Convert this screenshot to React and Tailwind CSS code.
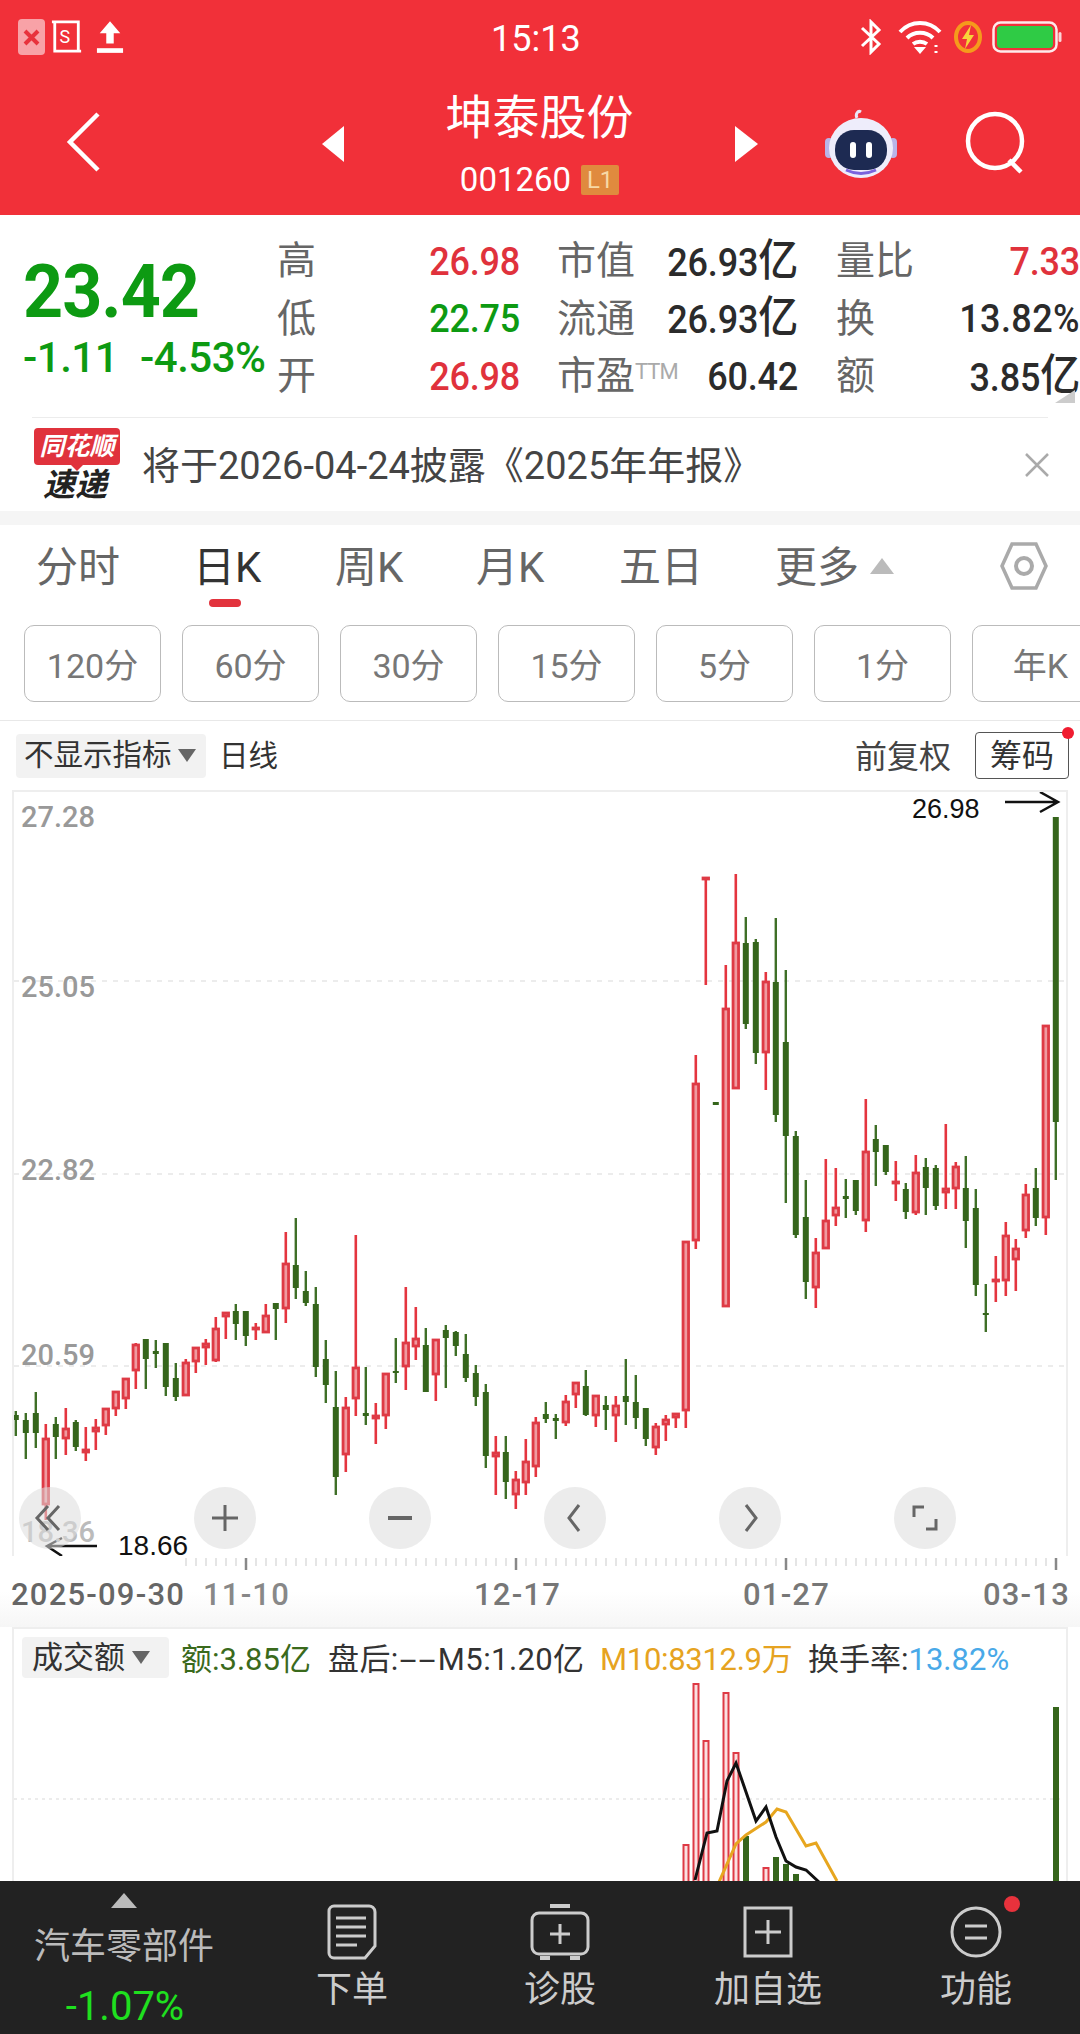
import React from 'react';

const candles = [
  [1411,1415,1420,1436,'g'],[1413,1420,1433,1459,'g'],[1392,1413,1433,1448,'g'],[1424,1438,1505,1520,'r'],
  [1417,1424,1437,1459,'g'],[1408,1428,1439,1455,'r'],[1420,1422,1447,1451,'g'],[1427,1449,1453,1461,'r'],
  [1419,1427,1432,1450,'r'],[1408,1408,1426,1435,'r'],[1391,1391,1409,1416,'r'],[1378,1378,1399,1409,'r'],
  [1343,1344,1371,1389,'r'],[1339,1339,1359,1389,'g'],[1340,1351,1354,1368,'g'],[1343,1343,1387,1396,'g'],
  [1363,1378,1397,1401,'g'],[1359,1362,1396,1396,'r'],[1347,1347,1362,1373,'r'],[1339,1343,1348,1365,'r'],
  [1317,1328,1361,1362,'r'],[1312,1312,1317,1339,'r'],[1304,1311,1324,1340,'g'],[1311,1311,1336,1346,'g'],
  [1323,1327,1330,1340,'r'],[1304,1315,1333,1333,'r'],[1303,1303,1309,1340,'g'],[1232,1263,1309,1323,'r'],
  [1218,1265,1288,1299,'g'],[1271,1291,1303,1306,'g'],[1287,1304,1367,1377,'g'],[1340,1359,1385,1403,'g'],
  [1371,1407,1477,1495,'g'],[1397,1407,1455,1472,'r'],[1235,1367,1399,1416,'r'],[1367,1413,1416,1425,'g'],
  [1403,1415,1419,1444,'r'],[1373,1373,1416,1429,'r'],[1338,1371,1373,1383,'g'],[1287,1342,1367,1390,'r'],
  [1307,1338,1347,1360,'r'],[1328,1345,1392,1392,'g'],[1339,1339,1375,1401,'r'],[1325,1330,1338,1388,'g'],
  [1331,1332,1346,1356,'g'],[1334,1354,1378,1382,'g'],[1365,1373,1397,1406,'g'],[1384,1392,1456,1468,'g'],
  [1436,1452,1457,1495,'r'],[1436,1452,1482,1499,'g'],[1471,1479,1495,1509,'r'],[1439,1461,1483,1495,'r'],
  [1417,1422,1467,1477,'r'],[1402,1414,1419,1423,'g'],[1414,1418,1421,1439,'g'],[1395,1401,1423,1426,'r'],
  [1382,1382,1395,1408,'r'],[1370,1386,1415,1416,'g'],[1395,1395,1416,1427,'r'],[1396,1405,1410,1430,'g'],
  [1396,1405,1416,1442,'r'],[1359,1396,1402,1425,'g'],[1375,1402,1418,1429,'g'],[1408,1408,1439,1446,'g'],
  [1423,1426,1448,1455,'r'],[1415,1419,1425,1441,'r'],[1413,1413,1418,1428,'r'],[1241,1241,1411,1428,'r'],
  [1055,1083,1241,1249,'r'],[877,877,879,985,'r'],[1102,1102,1105,1105,'g'],[965,1008,1307,1307,'r'],
  [874,942,1089,1089,'r'],[917,943,1024,1029,'g'],[939,942,1053,1064,'g'],[972,981,1053,1090,'r'],
  [918,982,1115,1122,'g'],[970,1042,1136,1203,'g'],[1131,1136,1235,1238,'g'],[1180,1217,1282,1299,'g'],
  [1238,1252,1288,1308,'r'],[1159,1220,1249,1249,'r'],[1168,1207,1216,1226,'r'],[1179,1196,1199,1218,'g'],
  [1180,1180,1211,1215,'g'],[1099,1151,1221,1232,'r'],[1125,1139,1152,1186,'g'],[1145,1145,1172,1175,'g'],
  [1161,1181,1184,1201,'r'],[1183,1189,1212,1219,'g'],[1155,1172,1213,1215,'r'],[1158,1167,1188,1215,'g'],
  [1165,1168,1206,1210,'g'],[1124,1188,1193,1209,'r'],[1162,1166,1189,1209,'r'],[1156,1188,1221,1248,'g'],
  [1189,1208,1285,1296,'g'],[1284,1313,1315,1332,'g'],[1256,1279,1281,1302,'r'],[1222,1235,1281,1296,'r'],
  [1239,1248,1260,1291,'r'],[1184,1194,1231,1238,'r'],[1168,1188,1218,1226,'g'],[1025,1025,1218,1235,'r'],
  [817,817,1122,1180,'g'],
];

const volumes = [
  [686,1844,'r'],[696,1683,'r'],[706,1740,'r'],[726,1692,'r'],[736,1752,'r'],[746,1836,'g'],
  [766,1867,'r'],[776,1857,'g'],[786,1864,'g'],[796,1874,'g'],[1056,1707,'g'],
];

const GREEN = '#35651b';
const RED = '#e4353f';

const Candle = ({ i, d }) => {
  const [hi, top, bot, lo, c] = d;
  const x = 15.8 + 10 * i;
  if (c === 'g') {
    return (
      <g>
        <line x1={x} x2={x} y1={hi} y2={lo} stroke="#3f6f27" strokeWidth="2.4" />
        <rect x={x - 3} y={top} width="6" height={Math.max(bot - top, 2)} fill={GREEN} />
      </g>
    );
  }
  return (
    <g>
      <line x1={x} x2={x} y1={hi} y2={top} stroke={RED} strokeWidth="2.6" />
      <line x1={x} x2={x} y1={bot} y2={lo} stroke={RED} strokeWidth="2.6" />
      <rect x={x - 2.75} y={top + 1} width="5.5" height={Math.max(bot - top - 2, 1)} fill="#f09aa0" stroke="#de3a45" strokeWidth="2.8" />
    </g>
  );
};

const Yi = () => <span className="text-[40px]">亿</span>;

const Row = ({ label, value, cls = 'text-[#2b2b2b]', w = 'w-[243px]' }) => (
  <div className={`${w} flex items-center justify-between`}>
    <span className="text-[#666] text-[39px] leading-none">{label}</span>
    <span className={`inline-block scale-y-[1.1] text-[36px] leading-none font-medium tracking-[-0.2px] ${cls}`}>{value}</span>
  </div>
);

const NavItem = ({ icon, label }) => (
  <div className="w-[208px] flex flex-col items-center text-[#ccc]">
    <div className="h-[62px] mt-[20px] flex items-center justify-center">{icon}</div>
    <span className="text-[36px] leading-none mt-[9px]">{label}</span>
  </div>
);

const CircleBtn = ({ children, cls }) => (
  <div className={`absolute top-[695px] w-[62px] h-[62px] rounded-full bg-[#dcdcdc]/55 flex items-center justify-center ${cls}`}>
    <svg width="36" height="36" viewBox="0 0 36 36" fill="none" stroke="#666" strokeWidth="3">{children}</svg>
  </div>
);

const timeframes = ['120分', '60分', '30分', '15分', '5分', '1分', '年K'];
const ticks = Array.from({ length: 88 }, (_, i) => 186 + i * 10);

export default function App() {
  return (
    <div className="w-[1080px] h-[2034px] overflow-hidden bg-white flex flex-col font-['Roboto','Noto_Sans_CJK_SC',sans-serif]">
      {/* red header */}
      <div className="h-[215px] bg-[#f13039] shrink-0 text-white">
        <div className="h-[74px] flex items-center justify-between relative">
          <div className="flex items-center pl-[18px] gap-[6px]">
            <div className="w-[27px] h-[36px] rounded-[4px] bg-[#f8a2a7] flex items-center justify-center">
              <svg width="17" height="17" viewBox="0 0 17 17" stroke="#e8323c" strokeWidth="4"><path d="M2 2 15 15M15 2 2 15" /></svg>
            </div>
            <svg width="32" height="38" viewBox="0 0 34 38" fill="none" stroke="#fff" strokeWidth="3">
              <path d="M1 3h28v30M4 3v31h28" />
              <text x="9" y="25" fill="#fff" stroke="none" fontSize="19" fontFamily="Roboto">S</text>
            </svg>
            <svg width="28" height="36" viewBox="0 0 30 36" fill="#fff" className="ml-[7px]">
              <path d="M15 1 26 14H19V25H11V14H4Z" />
              <rect x="1" y="30" width="28" height="5" />
            </svg>
          </div>
          <span className="absolute left-[491px] text-[36px] leading-none top-[21px]">15:13</span>
          <div className="flex items-center pr-[18px] gap-[10px]">
            <svg width="24" height="36" viewBox="0 0 24 36" fill="none" stroke="#fff" strokeWidth="3" className="mr-[4px]"><path d="M3 9 20 25 12 33V3L20 11 3 27" /></svg>
            <svg width="46" height="34" viewBox="0 0 46 34" fill="none" stroke="#fff" strokeWidth="4" className="ml-[1px]">
              <path d="M2 12C13 0 31 0 42 12M9 18C16 11 28 11 35 18M15 24c4-3 10-3 14 0" />
              <path d="M16 27l6 7 6-7z" fill="#fff" stroke="none" />
              <path d="M38 25v2M38 31v2" strokeWidth="3" />
            </svg>
            <svg width="28" height="32" viewBox="0 0 28 32" className="mr-[6px]">
              <ellipse cx="14" cy="16" rx="12" ry="14" fill="none" stroke="#f59a1c" strokeWidth="4" />
              <path d="M17 4 8 18h5l-2 10 9-14h-5z" fill="#f7d33a" />
            </svg>
            <svg width="70" height="32" viewBox="0 0 70 32" className="-ml-[6px]">
              <rect x="1.5" y="1.5" width="63" height="29" rx="7" fill="none" stroke="#fff" strokeWidth="2.5" opacity="0.9" />
              <rect x="5" y="5" width="56" height="22" rx="4" fill="#2fcb45" />
              <rect x="66.5" y="11" width="3" height="10" rx="1.5" fill="#fff" opacity="0.8" />
            </svg>
          </div>
        </div>
        <div className="h-[141px] flex items-start">
          <svg width="36" height="60" viewBox="0 0 36 60" fill="none" stroke="#fff" strokeWidth="4.5" className="ml-[66px] mt-[38px]">
            <path d="M32 2 4 30 32 58" strokeLinejoin="miter" />
          </svg>
          <svg width="22" height="36" viewBox="0 0 22 36" fill="#fff" className="ml-[220px] mt-[52px]"><path d="M22 0V36L0 18Z" /></svg>
          <div className="w-[391px] flex flex-col items-center">
            <span className="text-[47px] leading-none mt-[20px]">坤泰股份</span>
            <div className="flex items-center gap-[10px] mt-[22px]">
              <span className="text-[33px] leading-none">001260</span>
              <span className="w-[38px] h-[30px] bg-[#e08a3e] rounded-[2px] text-[#f7d9a6] text-[24px] leading-[30px] text-center">L1</span>
            </div>
          </div>
          <svg width="23" height="36" viewBox="0 0 23 36" fill="#fff" className="mt-[52px]"><path d="M0 0V36L23 18Z" /></svg>
          <svg width="74" height="72" viewBox="0 0 74 72" className="ml-[66px] mt-[34px]">
            <path d="M33 10c-2-4 1-8 4-6" fill="none" stroke="#e8e6f7" strokeWidth="3" />
            <rect x="1" y="30" width="8" height="20" rx="4" fill="#b9b4e8" />
            <rect x="65" y="30" width="8" height="20" rx="4" fill="#b9b4e8" />
            <ellipse cx="37" cy="40" rx="32" ry="30" fill="#eeedfb" />
            <rect x="11" y="22" width="52" height="40" rx="19" fill="#1d2a52" />
            <path d="M22 62Q37 69 52 62" fill="none" stroke="#7a63dd" strokeWidth="3" />
            <rect x="26" y="34" width="6" height="16" rx="3" fill="#fff" />
            <rect x="42" y="34" width="6" height="16" rx="3" fill="#fff" />
          </svg>
          <svg width="62" height="64" viewBox="0 0 62 64" fill="none" stroke="#fff" strokeWidth="4.5" className="ml-[67px] mt-[36px]">
            <ellipse cx="30" cy="31" rx="27" ry="27" />
            <path d="M44 50 56 62" />
          </svg>
        </div>
      </div>

      {/* quote */}
      <div className="h-[202px] shrink-0 flex relative">
        <div className="w-[277px] shrink-0 pl-[23px] pt-[47px]">
          <div className="h-[60px] flex items-center">
            <span className="inline-block scale-y-[1.05] text-[70px] leading-[56px] font-bold text-[#0d9a12] tracking-[-1px]">23.42</span>
          </div>
          <div className="flex text-[42px] leading-none font-medium text-[#0d9a12] mt-[15px] tracking-[-0.5px] whitespace-nowrap">
            <span className="w-[117px]">-1.11</span>
            <span>-4.53%</span>
          </div>
        </div>
        <div className="flex-1 pt-[18px] flex flex-col whitespace-nowrap">
          <div className="h-[57.5px] flex items-center">
            <Row label="高" value="26.98" cls="text-[#e0323c]" />
            <div className="w-[37px]" />
            <Row label="市值" value={<>26.93<Yi /></>} w="w-[241px]" />
            <div className="w-[38px]" />
            <Row label="量比" value="7.33" cls="text-[#e0323c]" w="w-[244px]" />
          </div>
          <div className="h-[57.5px] flex items-center">
            <Row label="低" value="22.75" cls="text-[#0d9a12]" />
            <div className="w-[37px]" />
            <Row label="流通" value={<>26.93<Yi /></>} w="w-[241px]" />
            <div className="w-[38px]" />
            <Row label="换" value="13.82%" cls="text-[#2b2b2b] tracking-[0.4px]" w="w-[244px]" />
          </div>
          <div className="h-[57.5px] flex items-center">
            <Row label="开" value="26.98" cls="text-[#e0323c]" />
            <div className="w-[37px]" />
            <Row
              label={<>市盈<span className="text-[22px] text-[#aaa] tracking-[-1px] align-[10px]">TTM</span></>}
              value="60.42"
              w="w-[241px]"
            />
            <div className="w-[38px]" />
            <Row label="额" value={<>3.85<Yi /></>} w="w-[244px]" />
          </div>
        </div>
        <div className="absolute right-[5px] bottom-[14px] w-0 h-0 border-l-[20px] border-l-transparent border-b-[13px] border-b-[#ccc]" />
      </div>
      <div className="h-px shrink-0 bg-[#ececec] mx-[32px]" />

      {/* notice */}
      <div className="h-[93px] shrink-0 flex items-center pl-[33px] pr-[30px]">
        <div className="w-[88px] flex flex-col items-center">
          <div className="w-[86px] h-[37px] bg-[#e0323c] rounded-[4px] text-white text-[25px] leading-[37px] italic font-bold text-center relative">
            同花顺
            <div className="absolute left-[36px] -bottom-[6px] w-0 h-0 border-x-[7px] border-x-transparent border-t-[7px] border-t-[#e0323c]" />
          </div>
          <div className="text-[32px] leading-none italic font-bold text-[#222] mt-[4px] -ml-[4px]">速递</div>
        </div>
        <span className="ml-[21px] mt-[2px] text-[38px] leading-none text-[#444] whitespace-nowrap">将于2026-04-24披露《2025年年报》</span>
        <svg width="26" height="26" viewBox="0 0 26 26" stroke="#aaa" strokeWidth="2.5" className="ml-auto"><path d="M2 2 24 24M24 2 2 24" /></svg>
      </div>
      <div className="h-[14px] shrink-0 bg-[#f5f5f5]" />

      {/* period tabs */}
      <div className="h-[87px] shrink-0 flex items-start pl-[36px] pt-[22px] text-[42px] leading-none text-[#666] relative whitespace-nowrap">
        <span className="w-[157px]">分时</span>
        <span className="w-[142px] text-[#333] relative">
          日K
          <span className="absolute left-[16px] top-[52px] w-[32px] h-[8px] rounded-full bg-[#e2333d]" />
        </span>
        <span className="w-[141px]">周K</span>
        <span className="w-[143px]">月K</span>
        <span className="w-[156px]">五日</span>
        <span>更多</span>
        <span className="ml-[11px] mt-[11px] w-0 h-0 border-x-[12px] border-x-transparent border-b-[16px] border-b-[#bbb]" />
        <svg width="50" height="48" viewBox="0 0 50 48" fill="none" stroke="#aaa" className="absolute left-[999px] top-[17px]">
          <path d="M3 24 13 2h24l10 22L37 46H13Z" strokeWidth="3.5" />
          <circle cx="25" cy="24" r="8" strokeWidth="4" />
        </svg>
      </div>

      {/* timeframes */}
      <div className="h-[109px] shrink-0 flex gap-[21px] pl-[24px] pt-[13px] overflow-hidden border-b border-[#e8e8e8]">
        {timeframes.map((t) => (
          <div key={t} className="w-[137px] h-[77px] shrink-0 border border-[#bbb] rounded-[10px] flex items-center justify-center pt-[5px] text-[34px] text-[#777]">
            {t}
          </div>
        ))}
      </div>

      {/* chart toolbar */}
      <div className="h-[69px] shrink-0 relative flex items-center pl-[16px] text-[29.5px] text-[#333] whitespace-nowrap">
        <div className="w-[190px] h-[44px] bg-[#f2f2f2] rounded-[4px] flex items-center pl-[8px]">
          不显示指标
          <span className="ml-[6px] w-0 h-0 border-x-[9px] border-x-transparent border-t-[13px] border-t-[#666]" />
        </div>
        <span className="ml-[13px] mt-[2px]">日线</span>
        <span className="ml-auto mr-[24px] mt-[2px] text-[32px] text-[#444]">前复权</span>
        <div className="w-[94px] h-[47px] border border-[#555] rounded-[4px] flex items-center justify-center mr-[11px] text-[32px] relative">
          筹码
          <span className="absolute -right-[6px] -top-[6px] w-[12px] h-[12px] rounded-full bg-[#f01c30]" />
        </div>
      </div>

      {/* k-line chart */}
      <div className="h-[766px] shrink-0 mx-[12px] border-x-2 border-t-2 border-[#eee] relative">
        <svg width="1052" height="764" viewBox="14 792 1052 764" className="absolute left-0 top-0">
          {[981, 1174, 1366].map((y) => (
            <line key={y} x1="14" x2="1064" y1={y} y2={y} stroke="#e6e6e6" strokeWidth="1.5" strokeDasharray="5 6" />
          ))}
          {candles.map((d, i) => <Candle key={i} i={i} d={d} />)}
          <path d="M1005 802H1057M1040 792 1058 802 1040 812" fill="none" stroke="#111" strokeWidth="2.5" />
          <path d="M97 1546H48M62 1538 47 1546 62 1556" fill="none" stroke="#111" strokeWidth="2.5" />
        </svg>
        <span className="absolute left-[7px] top-[10px] text-[29px] leading-[30px] font-medium text-[#999]">27.28</span>
        <span className="absolute left-[7px] top-[180px] text-[29px] leading-[30px] font-medium text-[#999]">25.05</span>
        <span className="absolute left-[7px] top-[363px] text-[29px] leading-[30px] font-medium text-[#999]">22.82</span>
        <span className="absolute left-[7px] top-[548px] text-[29px] leading-[30px] font-medium text-[#999]">20.59</span>
        <span className="absolute left-[7px] top-[725px] text-[29px] leading-[30px] font-medium text-[#bbb]">18.36</span>
        <span className="absolute left-[898px] top-[2px] text-[27px] leading-[30px] text-[#111] font-['Liberation_Sans',sans-serif]">26.98</span>
        <span className="absolute left-[104px] top-[739px] text-[28px] leading-[30px] text-[#111] font-['Liberation_Sans',sans-serif]">18.66</span>
        <CircleBtn cls="left-[5px]"><path d="M16 6 5 18 16 30M27 6 16 18 27 30" /></CircleBtn>
        <CircleBtn cls="left-[180px]"><path d="M18 5V31M5 18H31" /></CircleBtn>
        <CircleBtn cls="left-[355px]"><path d="M6 18H30" strokeWidth="4" /></CircleBtn>
        <CircleBtn cls="left-[530px]"><path d="M22 5 12 18 22 31" /></CircleBtn>
        <CircleBtn cls="left-[705px]"><path d="M14 5 24 18 14 31" /></CircleBtn>
        <CircleBtn cls="left-[880px]"><path d="M17 7H7V17M19 29H29V19" /></CircleBtn>
      </div>

      {/* time axis */}
      <div className="h-[71px] shrink-0 relative bg-gradient-to-b from-white via-white to-[#f6f6f6]">
        <svg width="1080" height="16" viewBox="0 0 1080 16" className="absolute left-0 top-0">
          {ticks.map((x) => {
            const major = (x - 246) % 270 === 0;
            return <line key={x} x1={x} x2={x} y1="2" y2={major ? 14 : 10} stroke={major ? '#888' : '#ddd'} strokeWidth={major ? 2.5 : 1.5} />;
          })}
        </svg>
        <div className="absolute left-[11px] right-[10px] top-[22px] flex text-[31px] leading-[34px] font-medium text-[#666] tracking-[1.2px] whitespace-nowrap">
          <span className="w-[192px]">2025-09-30</span>
          <span className="w-[271px] text-[#888]">11-10</span>
          <span className="w-[269px] text-[#777]">12-17</span>
          <span className="text-[#777]">01-27</span>
          <span className="ml-auto text-[#777]">03-13</span>
        </div>
      </div>

      {/* volume chart */}
      <div className="flex-1 min-h-0 mx-[12px] border-x-2 border-t-2 border-[#eee] relative overflow-hidden">
        <svg width="1052" height="252" viewBox="14 1629 1052 252" className="absolute left-0 top-0">
          <line x1="14" x2="1064" y1="1799" y2="1799" stroke="#e6e6e6" strokeWidth="1.5" strokeDasharray="3 4" />
          {volumes.map(([x, y, c]) => (
            c === 'r'
              ? <rect key={x} x={x - 2.5} y={y + 1} width="5" height={1890 - y} fill="#fbe0e2" stroke="#de3a45" strokeWidth="2" />
              : <rect key={x} x={x - 3} y={y} width="6" height={1890 - y} fill={GREEN} />
          ))}
          <polyline fill="none" stroke="#e7a61f" strokeWidth="3" points="719,1882 736,1844 746,1835 766,1822 777,1809 786,1812 806,1846 816,1843 837,1881" />
          <polyline fill="none" stroke="#111" strokeWidth="3" points="695,1880 707,1833 717,1831 727,1781 736,1763 756,1821 766,1807 776,1837 786,1861 796,1867 806,1870 819,1882" />
        </svg>
        <div className="flex items-center pl-[8px] pt-[8px] text-[31px] leading-none text-[#333] relative whitespace-nowrap">
          <div className="w-[147px] h-[41px] bg-[#f2f2f2] rounded-[4px] flex items-center pl-[10px] mr-[12px]">
            成交额
            <span className="ml-[7px] w-0 h-0 border-x-[9px] border-x-transparent border-t-[13px] border-t-[#666]" />
          </div>
          <div className="flex items-center mt-[4px]">
            <span className="w-[147px] text-[#3a6a1c]">额:3.85亿</span>
            <span className="w-[272px] tracking-[0.4px]">盘后:<span className="inline-block scale-x-[2] mx-[10px] tracking-[1px]">--</span>M5:1.20亿</span>
            <span className="w-[208px] tracking-[-0.3px] text-[#e6a321]">M10:8312.9万</span>
            <span>换手率:<span className="text-[#49a9e8]">13.82%</span></span>
          </div>
        </div>
      </div>

      {/* bottom bar */}
      <div className="h-[153px] shrink-0 bg-[#222] flex relative z-10">
        <div className="w-[248px] flex flex-col items-center">
          <span className="mt-[12px] w-0 h-0 border-x-[13px] border-x-transparent border-b-[15px] border-b-[#bbb]" />
          <span className="text-[36px] leading-none text-[#bbb] mt-[21px]">汽车零部件</span>
          <span className="text-[40px] leading-none text-[#1fe01f] mt-[22px] ml-[2px]">-1.07%</span>
        </div>
        <NavItem
          label="下单"
          icon={
            <svg width="50" height="56" viewBox="0 0 50 56" fill="none" stroke="#ccc" strokeWidth="3">
              <path d="M7 2H41a6 6 0 0 1 7 6V42L38 54H7a5 5 0 0 1-5-5V7a5 5 0 0 1 5-5Z" />
              <path d="M9 14H39M9 23H39M9 32H39M9 41H30" />
            </svg>
          }
        />
        <NavItem
          label="诊股"
          icon={
            <svg width="60" height="56" viewBox="0 0 60 56" fill="none" stroke="#ccc" strokeWidth="3">
              <path d="M20 2H40" strokeWidth="4" />
              <rect x="2" y="9" width="56" height="41" rx="7" />
              <path d="M30 20V40M20 30H40" />
              <path d="M10 54H20M40 54H50" strokeWidth="4" />
            </svg>
          }
        />
        <NavItem
          label="加自选"
          icon={
            <svg width="50" height="52" viewBox="0 0 50 52" fill="none" stroke="#ccc" strokeWidth="3">
              <rect x="2" y="2" width="46" height="48" />
              <path d="M25 14V38M12 26H38" />
            </svg>
          }
        />
        <NavItem
          label="功能"
          icon={
            <svg width="52" height="52" viewBox="0 0 52 52" fill="none" stroke="#ccc" strokeWidth="3">
              <circle cx="26" cy="26" r="24" />
              <path d="M15 20H37M15 32H37" />
            </svg>
          }
        />
        <span className="absolute left-[1004px] top-[15px] w-[16px] h-[16px] rounded-full bg-[#e8323c]" />
      </div>
    </div>
  );
}
